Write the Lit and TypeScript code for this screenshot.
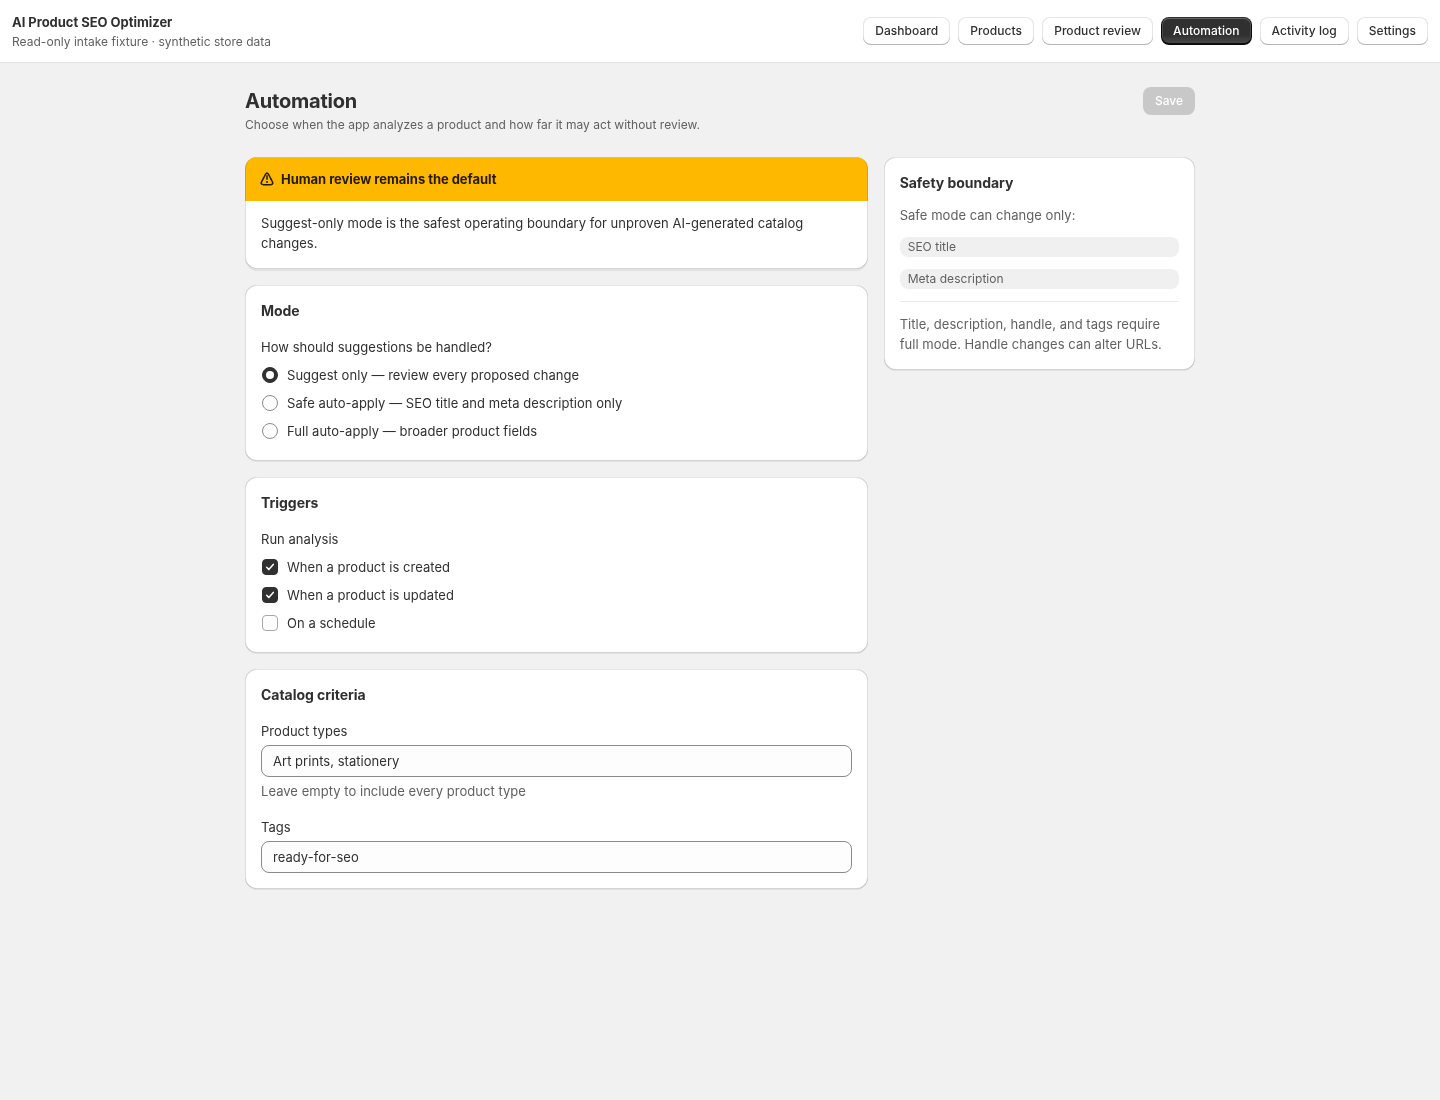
import { LitElement, html, css, svg } from "lit";
import { customElement, property } from "lit/decorators.js";
import { classMap } from "lit/directives/class-map.js";

@customElement("ui-card")
class UiCard extends LitElement {
  @property() heading = "";
  @property() gap = "loose";

  static styles = css`
    :host {
      display: block;
      position: relative;
      border-radius: 12px;
      background: #fff;
      box-shadow: 0 1px 0 0 rgba(26, 26, 26, 0.07);
    }
    :host::before {
      content: "";
      position: absolute;
      inset: 0;
      border-radius: 12px;
      pointer-events: none;
      mix-blend-mode: luminosity;
      box-shadow:
        1px 0 0 0 rgba(0, 0, 0, 0.13) inset,
        -1px 0 0 0 rgba(0, 0, 0, 0.13) inset,
        0 -1px 0 0 rgba(0, 0, 0, 0.17) inset,
        0 1px 0 0 rgba(204, 204, 204, 0.5) inset;
    }
    .body {
      display: flex;
      flex-direction: column;
      gap: 16px;
      padding: 16px;
    }
    .tight {
      gap: 12px;
    }
    .heading {
      margin: 0;
      font-size: 14px;
      line-height: 20px;
      font-weight: 650;
      letter-spacing: -0.04px;
    }
  `;

  render() {
    return html`<div class=${classMap({ body: true, tight: this.gap === "tight" })}>
      <h2 class="heading">${this.heading}</h2>
      <slot></slot>
    </div>`;
  }
}

const warningIcon = svg`
  <path d="M10 6a.75.75 0 0 1 .75.75v3.5a.75.75 0 0 1-1.5 0v-3.5a.75.75 0 0 1 .75-.75Z" />
  <path d="M11 13a1 1 0 1 1-2 0 1 1 0 0 1 2 0Z" />
  <path fill-rule="evenodd" d="M10 3.5c-1.045 0-1.784.702-2.152 1.447a449.26 449.26 0 0 1-2.005 3.847l-.028.052a403.426 403.426 0 0 0-2.008 3.856c-.372.752-.478 1.75.093 2.614.57.863 1.542 1.184 2.464 1.184h7.272c.922 0 1.895-.32 2.464-1.184.57-.864.465-1.862.093-2.614-.21-.424-1.113-2.147-2.004-3.847l-.032-.061a429.497 429.497 0 0 1-2.005-3.847c-.368-.745-1.107-1.447-2.152-1.447Zm-.808 2.112c.404-.816 1.212-.816 1.616 0 .202.409 1.112 2.145 2.022 3.88a418.904 418.904 0 0 1 2.018 3.875c.404.817 0 1.633-1.212 1.633h-7.272c-1.212 0-1.617-.816-1.212-1.633.202-.408 1.113-2.147 2.023-3.883a421.932 421.932 0 0 0 2.017-3.872Z" />
`;

const pages = ["Dashboard", "Products", "Product review", "Automation", "Activity log", "Settings"];

const modes = [
  { label: "Suggest only — review every proposed change", on: true },
  { label: "Safe auto-apply — SEO title and meta description only", on: false },
  { label: "Full auto-apply — broader product fields", on: false },
];

const triggers = [
  { label: "When a product is created", on: true },
  { label: "When a product is updated", on: true },
  { label: "On a schedule", on: false },
];

@customElement("app-root")
class AppRoot extends LitElement {
  static styles = css`
    :host {
      display: block;
      min-height: 1100px;
      background: #f1f1f1;
      color: #303030;
      font-family: Inter, "Liberation Sans", sans-serif;
      font-size: 13px;
      line-height: 20px;
      font-weight: 400;
      letter-spacing: 0.035px;
    }
    * {
      box-sizing: border-box;
    }
    p,
    h1 {
      margin: 0;
    }
    .topbar {
      display: flex;
      align-items: center;
      justify-content: space-between;
      height: 63px;
      padding: 0 12px;
      background: #fff;
      border-bottom: 1px solid #e3e3e3;
    }
    .brand {
      display: flex;
      flex-direction: column;
      gap: 2px;
    }
    .name {
      font-weight: 650;
      letter-spacing: -0.035px;
    }
    .small {
      font-size: 12px;
      line-height: 16px;
      letter-spacing: 0.028px;
      color: #616161;
    }
    .nav {
      display: flex;
      gap: 8px;
    }
    .button {
      height: 28px;
      padding: 6px 12px;
      border: 0;
      border-radius: 8px;
      font: 550 12px/16px Inter, "Liberation Sans", sans-serif;
      color: #303030;
      background: #fff;
      box-shadow:
        0 -1px 0 0 #b5b5b5 inset,
        0 0 0 1px rgba(0, 0, 0, 0.1) inset,
        0 0.5px 0 1.5px #fff inset;
    }
    .nav .button {
      letter-spacing: 0.055px;
    }
    .current {
      color: #fff;
      background: linear-gradient(180deg, rgba(48, 48, 48, 0) 63.53%, rgba(255, 255, 255, 0.15) 100%), #303030;
      box-shadow:
        0 -1px 0 1px rgba(0, 0, 0, 0.8) inset,
        0 0 0 1px #303030 inset,
        0 0.5px 0 1.5px rgba(255, 255, 255, 0.25) inset;
    }
    .disabled {
      color: #fff;
      background: rgba(0, 0, 0, 0.17);
      box-shadow: none;
    }
    .page {
      max-width: 998px;
      margin: 0 auto;
      padding: 24px;
    }
    .page-head {
      display: flex;
      justify-content: space-between;
      align-items: flex-start;
      height: 70px;
    }
    .title {
      padding-top: 2px;
      margin-bottom: 4px;
      font-size: 20px;
      line-height: 24px;
      font-weight: 650;
      letter-spacing: -0.2px;
    }
    .columns {
      display: grid;
      grid-template-columns: 2fr 1fr;
      gap: 16px;
      align-items: start;
    }
    .stack {
      display: flex;
      flex-direction: column;
      gap: 16px;
    }
    .banner {
      position: relative;
      border-radius: 12px;
      background: #fff;
      box-shadow: 0 3px 1px -1px rgba(26, 26, 26, 0.07);
    }
    .banner::after {
      content: "";
      position: absolute;
      inset: 0;
      border-radius: 12px;
      pointer-events: none;
      mix-blend-mode: luminosity;
      box-shadow:
        1px 0 0 0 rgba(0, 0, 0, 0.13) inset,
        -1px 0 0 0 rgba(0, 0, 0, 0.13) inset,
        0 -1px 0 0 rgba(0, 0, 0, 0.17) inset,
        0 1px 0 0 rgba(204, 204, 204, 0.5) inset;
    }
    .banner-head {
      display: flex;
      gap: 4px;
      padding: 12px;
      border-radius: 12px 12px 0 0;
      background: #ffb800;
      color: #251a00;
      font-weight: 650;
      letter-spacing: -0.04px;
    }
    .banner-icon {
      width: 20px;
      height: 20px;
      fill: currentColor;
    }
    .banner-body {
      padding: 12px 16px 16px;
    }
    .group {
      display: flex;
      flex-direction: column;
      gap: 4px;
    }
    .choices {
      display: flex;
      flex-direction: column;
    }
    .choice {
      display: flex;
      align-items: center;
      gap: 8px;
      padding: 4px 1px;
    }
    .control {
      width: 16px;
      height: 16px;
      margin-right: 1px;
      border: 1px solid #8a8a8a;
      border-radius: 4px;
      background: #fdfdfd;
      display: grid;
      place-items: center;
    }
    .box {
      border-color: #a8a8a8;
    }
    .round {
      border-radius: 50%;
    }
    .on {
      border-color: #303030;
      background: #303030;
    }
    .dot {
      width: 8px;
      height: 8px;
      border-radius: 50%;
      background: #fff;
    }
    .tick {
      width: 10px;
      height: 10px;
      fill: none;
      stroke: #fff;
      stroke-width: 1.5;
      stroke-linecap: round;
      stroke-linejoin: round;
    }
    .input {
      height: 32px;
      padding: 5px 11px;
      border: 1px solid #8a8a8a;
      border-radius: 8px;
      background: #fdfdfd;
    }
    .subdued {
      color: #616161;
    }
    .badge {
      height: 20px;
      padding: 2px 8px;
      border-radius: 8px;
      background: rgba(0, 0, 0, 0.06);
    }
    .rule {
      height: 1px;
      background: #ebebeb;
    }
  `;

  private renderRadio(item: { label: string; on: boolean }) {
    return html`<div class="choice">
      <span class=${classMap({ control: true, round: true, on: item.on })}>
        ${item.on ? html`<span class="dot"></span>` : ""}
      </span>
      <span>${item.label}</span>
    </div>`;
  }

  private renderCheckbox(item: { label: string; on: boolean }) {
    return html`<div class="choice">
      <span class=${classMap({ control: true, box: !item.on, on: item.on })}>
        ${item.on
          ? html`<svg class="tick" viewBox="0 0 10 10"><path d="M1.7 5.3 3.8 7.6 8.3 2.4" /></svg>`
          : ""}
      </span>
      <span>${item.label}</span>
    </div>`;
  }

  render() {
    return html`
      <header class="topbar">
        <div class="brand">
          <span class="name">AI Product SEO Optimizer</span>
          <span class="small">Read-only intake fixture · synthetic store data</span>
        </div>
        <nav class="nav">
          ${pages.map(
            (page) =>
              html`<button class=${classMap({ button: true, current: page === "Automation" })}>${page}</button>`
          )}
        </nav>
      </header>
      <main class="page">
        <div class="page-head">
          <div>
            <h1 class="title">Automation</h1>
            <p class="small">Choose when the app analyzes a product and how far it may act without review.</p>
          </div>
          <button class="button disabled">Save</button>
        </div>
        <div class="columns">
          <div class="stack">
            <section class="banner">
              <div class="banner-head">
                <svg class="banner-icon" viewBox="0 0 20 20">${warningIcon}</svg>
                <span>Human review remains the default</span>
              </div>
              <p class="banner-body">
                Suggest-only mode is the safest operating boundary for unproven AI-generated catalog changes.
              </p>
            </section>
            <ui-card heading="Mode">
              <div class="group">
                <span>How should suggestions be handled?</span>
                <div class="choices">${modes.map((m) => this.renderRadio(m))}</div>
              </div>
            </ui-card>
            <ui-card heading="Triggers">
              <div class="group">
                <span>Run analysis</span>
                <div class="choices">${triggers.map((t) => this.renderCheckbox(t))}</div>
              </div>
            </ui-card>
            <ui-card heading="Catalog criteria">
              <div class="group">
                <span>Product types</span>
                <div class="input">Art prints, stationery</div>
                <span class="subdued">Leave empty to include every product type</span>
              </div>
              <div class="group">
                <span>Tags</span>
                <div class="input">ready-for-seo</div>
              </div>
            </ui-card>
          </div>
          <ui-card heading="Safety boundary" gap="tight">
            <p class="subdued">Safe mode can change only:</p>
            <div class="badge small">SEO title</div>
            <div class="badge small">Meta description</div>
            <div class="rule"></div>
            <p class="subdued">Title, description, handle, and tags require full mode. Handle changes can alter URLs.</p>
          </ui-card>
        </div>
      </main>
    `;
  }
}
